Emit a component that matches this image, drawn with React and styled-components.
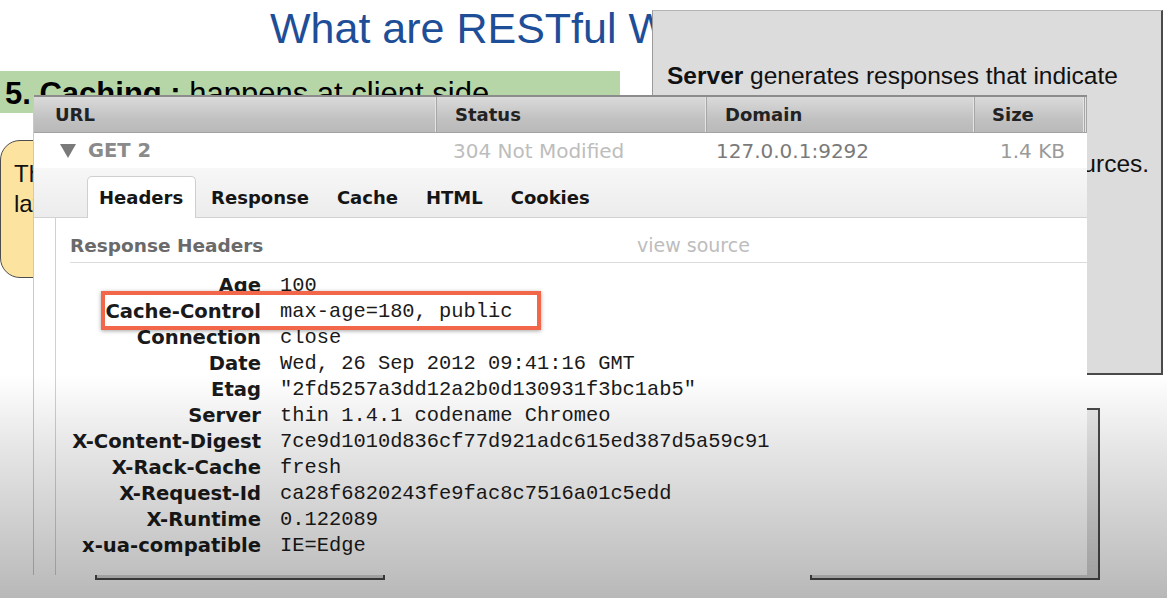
import React from "react";
import styled, { createGlobalStyle } from "styled-components";

const GlobalStyle = createGlobalStyle`
  html, body {
    margin: 0;
    padding: 0;
    background: #fff;
  }
  body {
    font-family: "Liberation Sans", Arial, sans-serif;
  }
`;

// slide canvas: shapes sit where the author dropped them
const Slide = styled.div`
  position: relative;
  width: 1167px;
  height: 598px;
  overflow: hidden;
  background: #fff;
`;

const Title = styled.h1`
  position: absolute;
  left: 270px;
  top: 1px;
  margin: 0;
  font-weight: 400;
  font-size: 43px;
  line-height: 54px;
  color: #1f4e98;
  white-space: nowrap;
`;

const PointBar = styled.div`
  position: absolute;
  left: 0;
  top: 71px;
  width: 620px;
  height: 42px;
  padding-left: 5px;
  box-sizing: border-box;
  background: #b7d6a8;
  font-size: 31px;
  line-height: 46px;
  color: #000;
  white-space: nowrap;
  b {
    font-weight: 700;
  }
`;

const Bubble = styled.div`
  position: absolute;
  left: 0;
  top: 140px;
  width: 260px;
  height: 138px;
  box-sizing: border-box;
  padding: 18px 0 0 13px;
  border: 1.5px solid #4d4d4d;
  border-radius: 20px;
  background: #fce4a0;
  font-size: 24px;
  line-height: 30px;
  color: #111;
  white-space: nowrap;
`;

const Callout = styled.div`
  position: absolute;
  left: 652px;
  top: 10px;
  width: 511px;
  height: 365px;
  box-sizing: border-box;
  padding: 43px 14px 0 14px;
  background: #dcdcdc;
  border-top: 1px solid #b4b4b4;
  border-left: 1px solid #9a9a9a;
  border-right: 2px solid #4a4a4a;
  border-bottom: 2px solid #4a4a4a;
  font-size: 24.5px;
  line-height: 44px;
  color: #111;
  white-space: nowrap;
  b {
    font-weight: 700;
  }
`;

const Frame = styled.div`
  position: absolute;
  left: ${(p) => p.$left}px;
  top: 408px;
  width: 290px;
  height: 172px;
  box-sizing: border-box;
  border: 2px solid #4a4a4a;
  background: linear-gradient(#ececec, #d6d6d6);
`;

const Capture = styled.section`
  position: absolute;
  left: 33px;
  top: 95px;
  width: 1054px;
  height: 480px;
  display: flex;
  flex-direction: column;
  background: #fff;
  border-left: 1px solid #c9c9c9;
  box-sizing: border-box;
  font-family: "DejaVu Sans", "Lucida Grande", sans-serif;
`;

const cols = "403px 270px 268px 110px 1fr";

const HeadRow = styled.div`
  display: grid;
  grid-template-columns: ${cols};
  height: 38px;
  border-top: 2px solid #8c8c8c;
  border-bottom: 1px solid #a2a2a2;
  box-sizing: border-box;
  background: linear-gradient(#dadada, #c2c2c2 60%, #b9b9b9);
`;

const HeadCell = styled.div`
  display: flex;
  align-items: center;
  padding-left: ${(p) => p.$pad}px;
  border-right: 1px solid #a6a6a6;
  box-shadow: inset -1px 0 0 #e4e4e4;
  font-weight: 700;
  font-size: 18px;
  color: #222;
`;

const RequestRow = styled.div`
  display: grid;
  grid-template-columns: ${cols};
  height: 35px;
  align-items: center;
`;

const RequestCell = styled.div`
  display: flex;
  align-items: center;
  gap: 12px;
  padding-left: ${(p) => p.$pad || 0}px;
  padding-right: ${(p) => p.$padRight || 0}px;
  justify-content: ${(p) => (p.$end ? "flex-end" : "flex-start")};
  color: ${(p) => p.$color};
  font-weight: ${(p) => (p.$bold ? 700 : 400)};
  font-size: ${(p) => (p.$bold ? "19.5px" : "20px")};
  white-space: nowrap;
`;

const Caret = styled.span`
  width: 0;
  height: 0;
  border-left: 8px solid transparent;
  border-right: 8px solid transparent;
  border-top: 14px solid #7a7a7a;
`;

const TabStrip = styled.div`
  display: flex;
  align-items: flex-end;
  gap: 3px;
  height: 50px;
  padding-left: 53px;
  box-sizing: border-box;
  background: linear-gradient(#f7f7f7, #ececec);
  border-bottom: 1px solid #d2d2d2;
`;

const Tab = styled.div`
  padding: 0 12px 0 11px;
  box-sizing: border-box;
  display: flex;
  align-items: center;
  font-weight: 700;
  font-size: 18px;
  color: #151515;
  border: 1px solid ${(p) => (p.$active ? "#cfcfcf" : "transparent")};
  border-bottom: none;
  border-radius: 5px 5px 0 0;
  background: ${(p) => (p.$active ? "#fff" : "transparent")};
  margin-bottom: ${(p) => (p.$active ? "-1px" : "0")};
  height: ${(p) => (p.$active ? "42px" : "41px")};
`;

const Panel = styled.div`
  flex: 1;
  margin-left: 21px;
  border-left: 1px solid #d0d0d0;
  display: flex;
  flex-direction: column;
`;

const PanelHead = styled.div`
  display: grid;
  grid-template-columns: 567px 1fr;
  align-items: center;
  height: 45px;
  padding-top: 10px;
  box-sizing: border-box;
  margin-left: 14px;
  border-bottom: 1px solid #dcdcdc;
  font-size: 19px;
  span:first-child {
    font-weight: 700;
    font-size: 18.5px;
    color: #6a6a6a;
  }
  span:last-child {
    color: #bdbdbd;
  }
`;

const HeaderList = styled.dl`
  display: grid;
  grid-template-columns: 205px auto;
  column-gap: 19px;
  grid-auto-rows: 26px;
  align-items: center;
  margin: 0;
  padding-top: 9px;
`;

const Name = styled.dt`
  text-align: right;
  font-weight: 700;
  font-size: 19.6px;
  color: #1a1a1a;
  white-space: nowrap;
`;

const Value = styled.dd`
  margin: 0;
  font-family: "Liberation Mono", "Courier New", monospace;
  font-size: 20.4px;
  color: #1a1a1a;
  white-space: nowrap;
`;

const Highlight = styled.div`
  position: absolute;
  left: 67px;
  top: 196px;
  width: 440px;
  height: 39px;
  box-sizing: border-box;
  border: 4px solid #f2674a;
  box-shadow: 0 1px 4px rgba(0, 0, 0, 0.35), inset 0 0 0 1px #fff;
`;

const Fade = styled.div`
  position: absolute;
  inset: 0;
  pointer-events: none;
  background: linear-gradient(
    to bottom,
    rgba(0, 0, 0, 0) 0,
    rgba(0, 0, 0, 0) 375px,
    rgba(0, 0, 0, 0.1) 450px,
    rgba(0, 0, 0, 0.28) 598px
  );
`;

const headers = [
  ["Age", "100"],
  ["Cache-Control", "max-age=180, public"],
  ["Connection", "close"],
  ["Date", "Wed, 26 Sep 2012 09:41:16 GMT"],
  ["Etag", "\"2fd5257a3dd12a2b0d130931f3bc1ab5\""],
  ["Server", "thin 1.4.1 codename Chromeo"],
  ["X-Content-Digest", "7ce9d1010d836cf77d921adc615ed387d5a59c91"],
  ["X-Rack-Cache", "fresh"],
  ["X-Request-Id", "ca28f6820243fe9fac8c7516a01c5edd"],
  ["X-Runtime", "0.122089"],
  ["x-ua-compatible", "IE=Edge"],
];

const tabs = ["Headers", "Response", "Cache", "HTML", "Cookies"];

export default function App() {
  return (
    <>
      <GlobalStyle />
      <Slide>
        <Title>What are RESTful Web Services?</Title>
        <PointBar>
          <b>5. Caching :</b> happens at client side
        </PointBar>
        <Bubble>
          The client stores responses
          <br />
          later on for reuse
        </Bubble>
        <Callout>
          <b>Server</b> generates responses that indicate
          <br />
          whether they are cacheable or not, to
          <br />
          improve performance in repeated resources.
        </Callout>
        <Frame $left={95} />
        <Frame $left={810} />

        <Capture>
          <HeadRow>
            <HeadCell $pad={21}>URL</HeadCell>
            <HeadCell $pad={18}>Status</HeadCell>
            <HeadCell $pad={18}>Domain</HeadCell>
            <HeadCell $pad={17}>Size</HeadCell>
            <HeadCell $pad={0} />
          </HeadRow>
          <RequestRow>
            <RequestCell $pad={26} $bold $color="#8a8a8a">
              <Caret />
              GET 2
            </RequestCell>
            <RequestCell $pad={16} $color="#bdbdbd">
              304 Not Modified
            </RequestCell>
            <RequestCell $pad={9} $color="#7a7a7a">
              127.0.0.1:9292
            </RequestCell>
            <RequestCell $end $padRight={20} $color="#9a9a9a">
              1.4 KB
            </RequestCell>
          </RequestRow>
          <TabStrip>
            {tabs.map((t, i) => (
              <Tab key={t} $active={i === 0}>
                {t}
              </Tab>
            ))}
          </TabStrip>
          <Panel>
            <PanelHead>
              <span>Response Headers</span>
              <span>view source</span>
            </PanelHead>
            <HeaderList>
              {headers.map(([k, v]) => (
                <React.Fragment key={k}>
                  <Name>{k}</Name>
                  <Value>{v}</Value>
                </React.Fragment>
              ))}
            </HeaderList>
          </Panel>
          <Highlight />
        </Capture>
        <Fade />
      </Slide>
    </>
  );
}
